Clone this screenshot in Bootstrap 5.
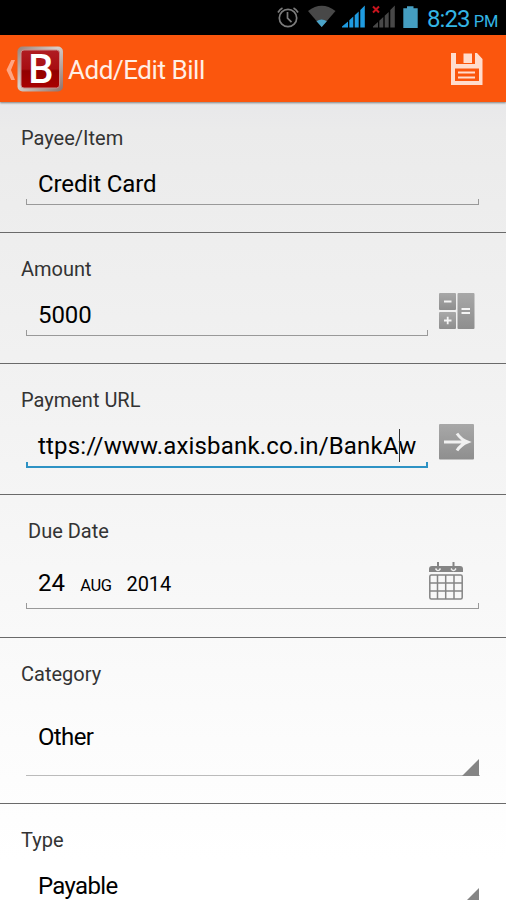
<!DOCTYPE html>
<html lang="en">
<head>
<meta charset="utf-8">
<meta name="viewport" content="width=device-width, initial-scale=1">
<title>Add/Edit Bill</title>
<link href="https://cdn.jsdelivr.net/npm/bootstrap@5.3.0/dist/css/bootstrap.min.css" rel="stylesheet">
<style>
html, body { height: 900px; overflow: hidden; }
body { font-family: Roboto, "Liberation Sans", sans-serif; color: #000; background: linear-gradient(#e8e8ea 102px, #ebebeb 130px, #f3f3f3 430px, #fcfcfc 740px, #fff 860px); }
main { height: 798px; overflow: hidden; }
svg { display: block; flex: none; }
.statusbar { height: 35px; background: #000; padding-right: 9px; }
.clock { width: 70px; font-size: 24px; line-height: 38px; height: 35px; color: #33b5e5; letter-spacing: -.9px; white-space: nowrap; }
.clock small { font-size: 16.5px; letter-spacing: -.2px; margin-left: 4px; }
.statusbar svg { margin-right: -1px; }
.appbar { height: 67px; background: #fb560d; box-shadow: 0 1px 2px rgba(0,0,0,.45); padding: 0 23px 0 6px; position: relative; }
.apptitle { font-size: 26px; line-height: 40px; color: #ffefe6; margin: 3px 0 0 4px; letter-spacing: -.45px; }
.bill-row { height: 131px; border-bottom: 1px solid #6a6a6a; padding: 24px 26px 0; }
.row-date { height: 143px; }
.row-pick { height: 166px; }
.bill-label { font-size: 20px; line-height: 24px; color: #333; margin-left: -5px; }
.row-date .bill-label { margin-left: 2px; }
.field { height: 35px; margin-top: 20px; margin-right: 1px; padding: 0 12px; border-bottom: 1px solid #999; font-size: 24px; line-height: 29px; letter-spacing: -.1px; white-space: nowrap; position: relative; }
.field::before, .field::after { content: ""; position: absolute; bottom: 0; width: 1px; height: 5px; background: #999; }
.field::before { left: 0; } .field::after { right: 0; }
.with-button .field { width: 402px; margin-right: 0; }
.with-button svg { margin: 11px 0 0 10px; }
.field.active { border-bottom: 2px solid #2d92c4; height: 36px; letter-spacing: .16px; }
.field.active::before, .field.active::after { width: 2px; height: 4px; background: #2d92c4; }
.caret { position: absolute; left: 373px; top: -3px; width: 1px; height: 33px; background: #333; }
.date-field { height: 66px; margin-top: 0; padding-top: 26px; letter-spacing: .1px; }
.date-field svg { position: absolute; right: 16px; top: 19px; }
.m { font-size: 16.5px; margin-left: 15px; letter-spacing: -.4px; } .y { font-size: 20px; margin-left: 15px; letter-spacing: -.1px; }
.spinner { height: 78px; margin-top: 12px; line-height: 79px; font-size: 24px; padding-left: 12px; letter-spacing: -.65px; border-bottom: 1px solid #bbb; position: relative; }
.spinner.last { height: 53px; margin-top: 0; line-height: 68px; }
.spinner::after { content: ""; position: absolute; right: 1px; bottom: -1px; width: 17px; height: 17px; background: #858585; clip-path: polygon(100% 0, 100% 100%, 0 100%); }
</style>
<script src="https://cdn.jsdelivr.net/npm/bootstrap@5.3.0/dist/js/bootstrap.bundle.min.js"></script>
</head>
<body>
<div class="statusbar d-flex align-items-center justify-content-end">
<svg width="152" height="35" viewBox="276 0 152 35">
<g fill="none" stroke="#7c7c7c" stroke-width="1.7"><circle cx="288" cy="18" r="8.7"/><path d="M287.500 12v6.200l4 4M278 12.500q1.500-3 4.500-4.500M293.500 8q3 1.500 4.500 4.500"/></g>
<path d="M308 11Q321.700 0.500 335.500 11L321.700 27Z" fill="#484848"/><path d="M316.500 21.200q5-3.200 10.300 0L321.700 27Z" fill="#4aa3c8"/>
<path d="M342 27.500V26.500l6-5v6ZM349.300 27.500V20.300l4-3.700v10.900ZM354.700 27.500V15.200l4-3.700v16ZM360.300 27.500V10l4.500-4.500v22Z" fill="#1f9be0"/>
<path d="M373 27.500V26.500l5-4.500v5.500ZM379.300 27.500V20.800l4-3.700v10.400ZM384.700 27.500V15.700l4-3.700v15.500ZM390.300 27.500V10l4.500-4.500v22Z" fill="#484848"/>
<path d="M373 6.500l6 6M379 6.500l-6 6" stroke="#c8141e" stroke-width="2"/>
<path d="M403.300 8.200H407V6.300h6.500v1.900h4.200V28h-14.400Z" fill="#459ec1"/>
</svg>
<div class="clock">8:23<small>PM</small></div>
</div>
<header class="appbar d-flex align-items-center">
<svg width="58" height="46" viewBox="6 45 58 46">
<defs><linearGradient id="rim" x2="1" y2="1"><stop stop-color="#998077"/><stop offset=".45" stop-color="#d6cfca"/><stop offset="1" stop-color="#907068"/></linearGradient><linearGradient id="red" x2="0" y2="1"><stop stop-color="#b01c22"/><stop offset=".5" stop-color="#a80e12"/><stop offset=".55" stop-color="#920000"/><stop offset="1" stop-color="#a00"/></linearGradient></defs>
<path d="M11.300 59H15l-4 10 4 10h-3.700L6.500 69Z" fill="#ffa582"/>
<rect x="17.500" y="45.500" width="45.500" height="45" rx="5" fill="url(#rim)"/><rect x="21" y="49" width="38.500" height="38" rx="3" fill="url(#red)" stroke="#c88d8a"/>
<text x="40.800" y="82.400" text-anchor="middle" font-size="40" font-weight="500" font-family="Roboto, sans-serif" fill="#fff">B</text>
</svg>
<div class="apptitle">Add/Edit Bill</div>
<svg class="ms-auto" width="32" height="32" viewBox="451 53 32 32"><path fill="#ffdccd" fill-rule="evenodd" d="M451 53h5v11h19V53h2l5.500 6v26H451ZM455 68.500V81h24V68.500ZM463.500 53.500H472V63h-8.500Z"/><path fill="#ffdccd" d="M464 54h6.500v8H464Z"/><path d="M458 72.500h17M458 77.500h17" stroke="#ffdccd" stroke-width="2.200"/></svg>
</header>
<main>
<section class="bill-row"><div class="bill-label">Payee/Item</div><div class="field">Credit Card</div></section>
<section class="bill-row with-button"><div class="bill-label">Amount</div><div class="d-flex"><div class="field">5000</div>
<svg width="38" height="38" viewBox="438 292 38 38"><defs><linearGradient id="key" x2="0" y2="1"><stop stop-color="#a8a8a8"/><stop offset="1" stop-color="#8e8e8e"/></linearGradient></defs><g fill="url(#key)"><rect x="439" y="293" width="17" height="17" rx="1"/><rect x="439" y="312" width="17" height="17" rx="1"/><rect x="457.500" y="293" width="17" height="36" rx="1"/></g><path d="M444 301.500h7.500M444 320.500h7.500M447.700 316.700v7.600M461.500 309h8.500M461.500 313h8.500" stroke="#f4f4f4" stroke-width="1.800"/></svg></div></section>
<section class="bill-row with-button"><div class="bill-label">Payment URL</div><div class="d-flex"><div class="field active">ttps://www.axisbank.co.in/BankAw<span class="caret"></span></div>
<svg width="38" height="38" viewBox="438 423 38 38"><rect x="439" y="424" width="35" height="35.500" rx="1" fill="url(#key)"/><path d="M444 442h22.500M457 433.500q4 6 10.500 8.500q-6.500 2.500-10.500 8.500" fill="none" stroke="#f0f0f0" stroke-width="3"/></svg></div></section>
<section class="bill-row row-date"><div class="bill-label">Due Date</div><div class="field date-field">24<span class="m">AUG</span><span class="y">2014</span>
<svg width="34" height="39" viewBox="429 562 34 39"><path d="M429 572v-3q0-3 3-3h28q3 0 3 3v3Z" fill="#858585"/><g fill="none" stroke="#858585" stroke-width="1.500"><rect x="429.800" y="575" width="32.400" height="24" rx="1.500"/><path d="M437.500 575v24M445.700 575v24M454 575v24M430 583h32M430 591h32"/></g><path d="M435.500 568.500q2.500 4 5 0M451 568.500q2.500 4 5 0" fill="none" stroke="#eee" stroke-width="1.500"/><path d="M438 562v7.500M453.500 562v7.500" stroke="#858585" stroke-width="2"/></svg></div></section>
<section class="bill-row row-pick"><div class="bill-label">Category</div><div class="spinner">Other</div></section>
<section class="bill-row row-pick"><div class="bill-label">Type</div><div class="spinner last">Payable</div></section>
</main>
</body>
</html>
